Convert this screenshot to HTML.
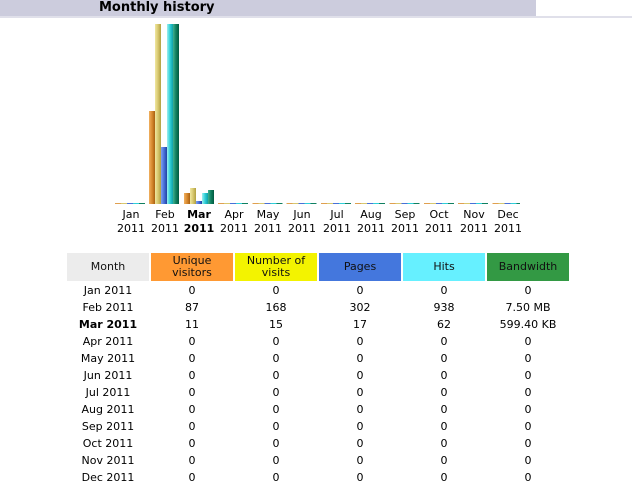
<!DOCTYPE html>
<html><head><meta charset="utf-8"><style>
body{margin:0;width:632px;height:484px;background:#fff;font-family:"DejaVu Sans","Liberation Sans",sans-serif;font-size:11px;color:#000;position:relative;overflow:hidden}
.hd{position:absolute;left:0;top:0;width:536px;height:16px;background:#ccccdd}
.hd b{position:absolute;left:99px;top:0;font-size:13px;line-height:16px;font-family:"DejaVu Sans",sans-serif}
.ln{position:absolute;left:0;top:16px;width:632px;height:2px;background:#e0e0ea}
.b{position:absolute;width:6px}
.o{background:linear-gradient(90deg,#f0b060,#d88a30,#a86010)}
.y{background:linear-gradient(90deg,#f0e8a0,#d8c870,#b0a040)}
.u{background:linear-gradient(90deg,#80a0f0,#4870d8,#2040a0)}
.c{background:linear-gradient(90deg,#a0f0f0,#30d0d8,#10a0a8)}
.g{background:linear-gradient(90deg,#40b090,#108060,#005a40)}
.lb{position:absolute;top:208px;width:40px;text-align:center;line-height:14px;font-size:11px}
table{position:absolute;left:65px;top:251px;border-collapse:separate;border-spacing:2px 2px;font-size:11px}
th{font-weight:normal;height:28px;width:82px;padding:0;line-height:12px;color:#111}
td{text-align:center;height:15px;padding:0;line-height:15px}
</style></head><body>
<div class="hd"><b>Monthly history</b></div>
<div class="ln"></div>
<div id="ch"></div>
<div class="b o" style="left:149px;top:111px;height:93px"></div>
<div class="b y" style="left:155px;top:24px;height:180px"></div>
<div class="b u" style="left:161px;top:147px;height:57px"></div>
<div class="b c" style="left:167px;top:24px;height:180px"></div>
<div class="b g" style="left:173px;top:24px;height:180px"></div>
<div class="b o" style="left:184px;top:193px;height:11px"></div>
<div class="b y" style="left:190px;top:188px;height:16px"></div>
<div class="b u" style="left:196px;top:201px;height:3px"></div>
<div class="b c" style="left:202px;top:193px;height:11px"></div>
<div class="b g" style="left:208px;top:190px;height:14px"></div>
<div class="b o" style="left:115px;top:203px;height:1px;width:30px;background:linear-gradient(90deg,#e0a050 20%,#d8c870 20% 40%,#4870d8 40% 60%,#30d0d8 60% 80%,#108060 80%)"></div>
<div class="b" style="left:218px;top:203px;height:1px;width:302px;background:repeating-linear-gradient(90deg,#e0a050 0 6px,#d8c870 6px 12px,#4870d8 12px 18px,#30d0d8 18px 24px,#108060 24px 30px,#fff 30px 34.3px)"></div>
<div class="lb" style="left:111px">Jan<br>2011</div>
<div class="lb" style="left:145px">Feb<br>2011</div>
<div class="lb" style="left:179px;font-weight:bold">Mar<br>2011</div>
<div class="lb" style="left:214px">Apr<br>2011</div>
<div class="lb" style="left:248px">May<br>2011</div>
<div class="lb" style="left:282px">Jun<br>2011</div>
<div class="lb" style="left:317px">Jul<br>2011</div>
<div class="lb" style="left:351px">Aug<br>2011</div>
<div class="lb" style="left:385px">Sep<br>2011</div>
<div class="lb" style="left:419px">Oct<br>2011</div>
<div class="lb" style="left:454px">Nov<br>2011</div>
<div class="lb" style="left:488px">Dec<br>2011</div>
<table>
<tr><th style="background:#ececec">Month</th><th style="background:#ff9933">Unique<br>visitors</th><th style="background:#f3f300">Number of<br>visits</th><th style="background:#4477dd">Pages</th><th style="background:#66f0ff">Hits</th><th style="background:#339944">Bandwidth</th></tr>
<tr><td>Jan 2011</td><td>0</td><td>0</td><td>0</td><td>0</td><td>0</td></tr>
<tr><td>Feb 2011</td><td>87</td><td>168</td><td>302</td><td>938</td><td>7.50 MB</td></tr>
<tr><td><b>Mar 2011</b></td><td>11</td><td>15</td><td>17</td><td>62</td><td>599.40 KB</td></tr>
<tr><td>Apr 2011</td><td>0</td><td>0</td><td>0</td><td>0</td><td>0</td></tr>
<tr><td>May 2011</td><td>0</td><td>0</td><td>0</td><td>0</td><td>0</td></tr>
<tr><td>Jun 2011</td><td>0</td><td>0</td><td>0</td><td>0</td><td>0</td></tr>
<tr><td>Jul 2011</td><td>0</td><td>0</td><td>0</td><td>0</td><td>0</td></tr>
<tr><td>Aug 2011</td><td>0</td><td>0</td><td>0</td><td>0</td><td>0</td></tr>
<tr><td>Sep 2011</td><td>0</td><td>0</td><td>0</td><td>0</td><td>0</td></tr>
<tr><td>Oct 2011</td><td>0</td><td>0</td><td>0</td><td>0</td><td>0</td></tr>
<tr><td>Nov 2011</td><td>0</td><td>0</td><td>0</td><td>0</td><td>0</td></tr>
<tr><td>Dec 2011</td><td>0</td><td>0</td><td>0</td><td>0</td><td>0</td></tr>
</table>
</body></html>
